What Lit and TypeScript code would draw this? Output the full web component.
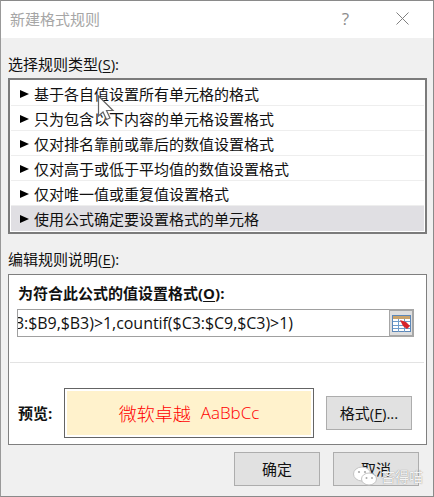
import { LitElement, html, css } from 'lit';
import { customElement } from 'lit/decorators.js';

const RULES = [
  '基于各自值设置所有单元格的格式',
  '只为包含以下内容的单元格设置格式',
  '仅对排名靠前或靠后的数值设置格式',
  '仅对高于或低于平均值的数值设置格式',
  '仅对唯一值或重复值设置格式',
  '使用公式确定要设置格式的单元格',
];

@customElement('app-root')
export class AppRoot extends LitElement {
  static styles = css`
    :host {
      display: block;
      width: 434px;
      height: 497px;
      position: relative;
      overflow: hidden;
      box-sizing: border-box;
      border: 1px solid #8a8a8a;
      border-left-color: #999;
      background: #f0f0f0;
      color: #111;
      font-family: "Open Sans", "Noto Sans CJK SC", sans-serif;
      font-size: 15px;
      line-height: 20px;
    }
    .titlebar {
      box-sizing: border-box;
      height: 37px;
      background: #fff;
      display: flex;
      align-items: center;
      padding: 0 24px 2px 9px;
      color: #a6a6a6;
    }
    .title { flex: 1; }
    .help { font-size: 17px; color: #8c8c8c; margin-right: 47px; }
    .body {
      display: flex;
      flex-direction: column;
      padding: 16px 6px 0 7px;
    }
    .label { height: 24px; }
    u { text-underline-offset: 2px; }
    .list {
      box-sizing: border-box;
      height: 156px;
      border: 2px solid #7b7b7b;
      background: #fff;
      padding: 1px;
    }
    .rule {
      box-sizing: border-box;
      height: 25px;
      padding: 1px 0 0 9px;
      display: flex;
      align-items: center;
      gap: 4px;
      border-bottom: 1px solid #eeeeee;
    }
    .rule:last-child { border-bottom: none; background: #e0dfe3; }
    .arrow {
      width: 0;
      height: 0;
      border-left: 9px solid #000;
      border-top: 4.5px solid transparent;
      border-bottom: 4.5px solid transparent;
      margin-right: 1px;
    }
    .label2 { margin-top: 15px; height: 25px; }
    .group {
      box-sizing: border-box;
      height: 171px;
      border: 1px solid #7f7f7f;
      background: #fff;
      display: flex;
      flex-direction: column;
      padding: 8px 8px 0 8px;
    }
    .bold { font-weight: 700; height: 26px; padding-left: 1px; }
    .formula { display: flex; height: 28px; width: 397px; }
    .input {
      flex: 1;
      min-width: 0;
      box-sizing: border-box;
      border: 1px solid #a0a0a0;
      border-right: none;
      overflow: hidden;
      white-space: nowrap;
      display: flex;
      align-items: center;
      justify-content: flex-end;
      font-size: 16px;
      padding-right: 96px;
    }
    .input span { letter-spacing: -0.05px; }
    .picker {
      width: 25px;
      box-sizing: border-box;
      background: #dedede;
      border: 2px solid #a6a6a6;
      border-left-width: 1px;
      display: flex;
      align-items: center;
      justify-content: center;
    }
    .divider {
      height: 1px;
      background: #e3e3e3;
      margin: 25px -6px 0 -7px;
    }
    .preview-row {
      display: flex;
      align-items: center;
      margin-top: 25px;
    }
    .preview-label { font-weight: 700; width: 47px; padding-left: 1px; box-sizing: border-box; }
    .swatch {
      box-sizing: border-box;
      width: 250px;
      height: 50px;
      border: 1px solid #646464;
      padding: 2px;
      background: #fff;
      margin-right: 12px;
    }
    .swatch div {
      height: 100%;
      background: #fff2cc;
      color: #f00;
      font-size: 18px;
      font-family: "Noto Sans CJK SC", sans-serif;
      font-weight: 300;
      display: flex;
      align-items: center;
      justify-content: center;
      gap: 10px;
    }
    .swatch .latin { font-family: "Open Sans", sans-serif; font-size: 17px; }
    .btn {
      box-sizing: border-box;
      width: 86px;
      height: 34px;
      padding-bottom: 1px;
      background: #e1e1e1;
      border: 1px solid #adadad;
      display: flex;
      align-items: center;
      justify-content: center;
    }
    .actions {
      display: flex;
      gap: 13px;
      margin-top: 7px;
      padding-left: 226px;
    }
    .cursor { position: absolute; left: 96px; top: 94px; }
    .mark {
      position: absolute;
      left: 352px;
      top: 464px;
      display: flex;
      align-items: center;
      gap: 4px;
      color: #f4f4f4;
      font-size: 14px;
      text-shadow: 0 0 1px #777;
    }
    .mark span { margin-top: 2px; }
  `;

  render() {
    return html`
      <div class="titlebar">
        <span class="title">新建格式规则</span>
        <span class="help">?</span>
        <svg width="13" height="13" viewBox="0 0 13 13"><path d="M.5.5l12 12M12.5.5l-12 12" stroke="#808080" fill="none"/></svg>
      </div>
      <div class="body">
        <div class="label">选择规则类型(<u>S</u>):</div>
        <div class="list">
          ${RULES.map((r) => html`<div class="rule"><span class="arrow"></span><span>${r}</span></div>`)}
        </div>
        <div class="label2">编辑规则说明(<u>E</u>):</div>
        <div class="group">
          <div class="bold">为符合此公式的值设置格式(<u>O</u>):</div>
          <div class="formula">
            <div class="input"><span>=and(countif($B3:$B9,$B3)&gt;1,countif($C3:$C9,$C3)&gt;1)</span></div>
            <div class="picker">
              <svg width="19" height="17" viewBox="0 0 19 17">
                <rect x=".5" y=".5" width="18" height="16" fill="#fff" stroke="#5c87b8"/>
                <rect x="1" y="1" width="17" height="3" fill="#c9a26a"/>
                <path d="M1 6.5h17M1 10.5h17M1 13.5h17M6.5 4v13M12.5 4v13" stroke="#6f9ccb"/>
                <path d="M8 5l6 2 4 4-3 3-4-3z" fill="#d8232a"/>
              </svg>
            </div>
          </div>
          <div class="divider"></div>
          <div class="preview-row">
            <span class="preview-label">预览:</span>
            <div class="swatch"><div><span>微软卓越</span><span class="latin">AaBbCc</span></div></div>
            <div class="btn">格式(<u>F</u>)...</div>
          </div>
        </div>
        <div class="actions">
          <div class="btn">确定</div>
          <div class="btn">取消</div>
        </div>
      </div>
      <svg class="cursor" width="18" height="28" viewBox="0 0 18 28">
        <path d="M1.5 1v20l4.500-4 3.500 7.500 3.500-1.500-3.500-7.500h6.500z" fill="#fff" stroke="#666" stroke-width="1.2"/>
      </svg>
      <div class="mark">
        <svg width="24" height="20" viewBox="0 0 24 20">
          <ellipse cx="9" cy="8" rx="8.500" ry="7" fill="#fff" stroke="#c4c4c4"/>
          <ellipse cx="16" cy="13" rx="7.500" ry="6" fill="#fff" stroke="#c4c4c4"/>
          <circle cx="6" cy="6" r="1.100" fill="#aaa"/>
          <circle cx="12" cy="6" r="1.100" fill="#aaa"/>
          <circle cx="13.500" cy="12" r="1" fill="#aaa"/>
          <circle cx="19" cy="12" r="1" fill="#aaa"/>
        </svg>
        <span>吝得喵</span>
      </div>
    `;
  }
}
